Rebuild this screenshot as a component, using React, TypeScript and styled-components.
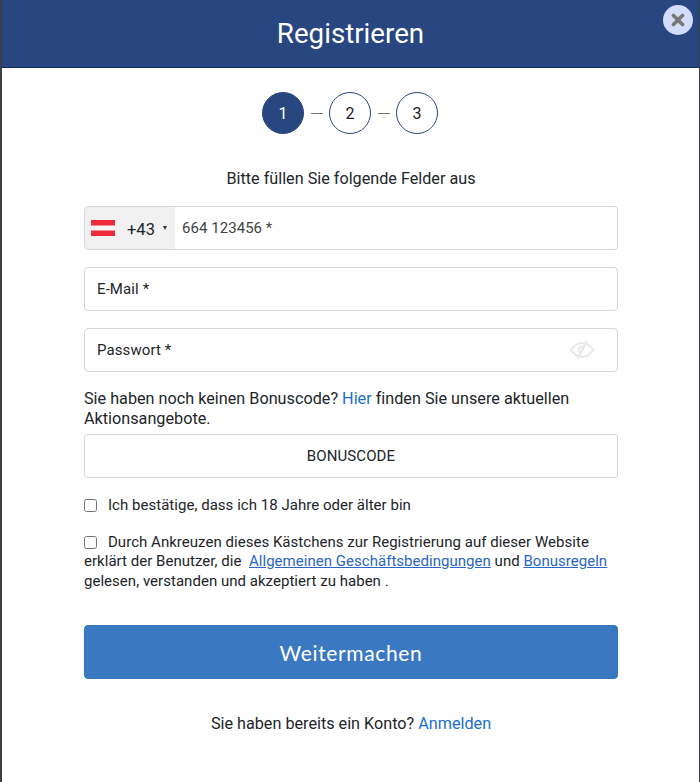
import * as React from "react";
import styled, { createGlobalStyle } from "styled-components";

const GlobalStyle = createGlobalStyle`
  html, body {
    margin: 0;
    padding: 0;
    background: #3a3f48;
  }
  body {
    font-family: Roboto, "Liberation Sans", sans-serif;
  }
`;

const Modal = styled.div`
  position: relative;
  width: 697px;
  height: 782px;
  margin-left: 2px;
  background: #ffffff;
`;

const Header = styled.header`
  height: 67px;
  background: #28467f;
  border-bottom: 1px solid #0f2a66;
  display: flex;
  align-items: center;
  justify-content: center;
`;

const Title = styled.h1`
  margin: 0;
  font-size: 27.7px;
  font-weight: 400;
  color: #ffffff;
`;

const CloseButton = styled.button`
  position: absolute;
  top: 5px;
  right: 6px;
  width: 30px;
  height: 30px;
  padding: 0;
  border: none;
  border-radius: 50%;
  background: #d3dcfa;
  display: flex;
  align-items: center;
  justify-content: center;
`;

const Body = styled.div`
  padding: 24px 81px 0 82px;
  display: flex;
  flex-direction: column;
`;

const Steps = styled.div`
  display: flex;
  align-items: center;
  justify-content: center;
  gap: 6.5px;
  padding-right: 2px;
`;

const Step = styled.div<{ $active?: boolean }>`
  width: 42px;
  height: 42px;
  box-sizing: border-box;
  border-radius: 50%;
  border: 1px solid #28467f;
  background: ${(p) => (p.$active ? "#28467f" : "#ffffff")};
  color: ${(p) => (p.$active ? "#ffffff" : "#222222")};
  font-size: 16px;
  display: flex;
  align-items: center;
  justify-content: center;
`;

const StepDash = styled.span`
  width: 12px;
  height: 1px;
  background: #777777;
`;

const Instruction = styled.p`
  margin: 35px 0 18px;
  font-size: 16.2px;
  line-height: 19px;
  color: #212529;
  text-align: center;
`;

const Field = styled.div<{ $gap?: number }>`
  height: 44px;
  box-sizing: border-box;
  border: 1px solid #d6d6d6;
  border-radius: 4px;
  background: #ffffff;
  display: flex;
  align-items: center;
  margin-bottom: ${(p) => p.$gap ?? 17}px;
  overflow: hidden;
`;

const CountryBox = styled.div`
  width: 90px;
  height: 100%;
  background: #f1f1f1;
  display: flex;
  align-items: center;
  flex: none;
  padding-left: 6px;
  box-sizing: border-box;
`;

const DialCode = styled.span`
  font-size: 16.5px;
  color: #212529;
  margin-left: 12px;
  padding-top: 2px;
`;

const Caret = styled.span`
  width: 0;
  height: 0;
  margin-left: 8px;
  border-left: 2.5px solid transparent;
  border-right: 2.5px solid transparent;
  border-top: 4px solid #333333;
`;

const PhoneText = styled.span`
  margin-left: 7px;
  font-size: 15px;
  letter-spacing: 0.05px;
  color: #3f4347;
`;

const FieldLabel = styled.span`
  margin-left: 12px;
  flex: 1;
  font-size: 15px;
  letter-spacing: 0.1px;
  color: #212529;
`;

const EyeSlot = styled.span`
  margin-right: 22px;
  display: flex;
`;

const BonusHint = styled.p`
  margin: 1px 0 5px;
  font-size: 16.2px;
  line-height: 20px;
  letter-spacing: 0.01px;
  color: #212529;
`;

const TextLink = styled.a`
  color: #1a6fd0;
  text-decoration: none;
`;

const BonusField = styled(Field)`
  justify-content: center;
  font-size: 15px;
  letter-spacing: 0.1px;
  color: #212529;
  margin-bottom: 18px;
`;

const Check = styled.span`
  display: inline-block;
  width: 13px;
  height: 13px;
  box-sizing: border-box;
  border: 1px solid #767676;
  border-radius: 2.5px;
  background: #ffffff;
  margin-right: 11px;
  vertical-align: -2px;
`;

const Agreement = styled.p<{ $gap: number }>`
  margin: 0 0 ${(p) => p.$gap}px;
  font-size: 15px;
  line-height: 19.5px;
  letter-spacing: 0.03px;
  color: #212529;
`;

const TermsLink = styled.a`
  color: #2a66c4;
  text-decoration: underline;
`;

const SubmitButton = styled.button`
  height: 54px;
  box-sizing: border-box;
  border: 1px solid #2e74bf;
  border-radius: 4px;
  background: #3b78c2;
  color: #ffffff;
  font-family: Lato, "Open Sans", sans-serif;
  font-size: 21px;
  letter-spacing: 0.65px;
  padding: 0;
`;

const LoginLine = styled.p`
  margin: 35px 0 0;
  font-size: 16.2px;
  line-height: 19px;
  text-align: center;
  color: #212529;
`;

const AustrianFlag = () => (
  <svg width="24" height="16" viewBox="0 0 24 16">
    <rect width="24" height="16" fill="#ed2939" />
    <rect y="5.5" width="24" height="5" fill="#f8f4f4" />
  </svg>
);

const EyeOffIcon = () => (
  <svg width="26" height="20" viewBox="0 0 26 20" fill="none" stroke="#e8e8e8" strokeWidth="2">
    <path d="M1.500 10 7 4.800C9 3.500 11 3 13 3S17 3.500 19 4.800L24.500 10 19 15.200C17 16.500 15 17 13 17S9 16.500 7 15.200Z" />
    <path d="M13 6.500A3.500 3.500 0 0 0 10.500 12.500" />
    <path d="M17.500 1.500 9 18.500" strokeWidth="2.400" />
  </svg>
);

export default function App() {
  return (
    <Modal>
      <GlobalStyle />
      <Header>
        <Title>Registrieren</Title>
      </Header>
      <CloseButton aria-label="Schließen">
        <svg width="14" height="14" viewBox="0 0 14 14">
          <path d="M2.500 2.500 11.500 11.500M11.500 2.500 2.500 11.500" stroke="#77786f" strokeWidth="3.600" strokeLinecap="round" />
        </svg>
      </CloseButton>
      <Body>
        <Steps>
          <Step $active>1</Step>
          <StepDash />
          <Step>2</Step>
          <StepDash />
          <Step>3</Step>
        </Steps>
        <Instruction>Bitte füllen Sie folgende Felder aus</Instruction>
        <Field>
          <CountryBox>
            <AustrianFlag />
            <DialCode>+43</DialCode>
            <Caret />
          </CountryBox>
          <PhoneText>664 123456 *</PhoneText>
        </Field>
        <Field>
          <FieldLabel>E-Mail *</FieldLabel>
        </Field>
        <Field $gap={16}>
          <FieldLabel>Passwort *</FieldLabel>
          <EyeSlot>
            <EyeOffIcon />
          </EyeSlot>
        </Field>
        <BonusHint>
          Sie haben noch keinen Bonuscode? <TextLink>Hier</TextLink> finden Sie unsere aktuellen Aktionsangebote.
        </BonusHint>
        <BonusField>BONUSCODE</BonusField>
        <Agreement $gap={17}>
          <Check />
          Ich bestätige, dass ich 18 Jahre oder älter bin
        </Agreement>
        <Agreement $gap={34}>
          <Check />
          Durch Ankreuzen dieses Kästchens zur Registrierung auf dieser Website erklärt der Benutzer, die&nbsp;{" "}
          <TermsLink>Allgemeinen Geschäftsbedingungen</TermsLink> und <TermsLink>Bonusregeln</TermsLink> gelesen,
          verstanden und akzeptiert zu haben .
        </Agreement>
        <SubmitButton>Weitermachen</SubmitButton>
        <LoginLine>
          Sie haben bereits ein Konto? <TextLink>Anmelden</TextLink>
        </LoginLine>
      </Body>
    </Modal>
  );
}
